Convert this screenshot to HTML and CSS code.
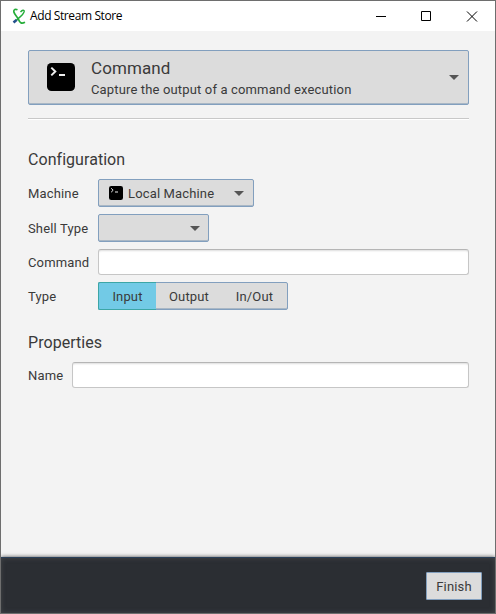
FILE: index.html
```html
<!DOCTYPE html>
<html lang="en">
<head>
<meta charset="utf-8">
<title>Add Stream Store</title>
<link rel="stylesheet" href="styles.css">
</head>
<body>
<svg width="0" height="0" class="defs">
  <symbol id="terminal" viewBox="0 0 28 28">
    <rect width="28" height="28" rx="4.500" fill="#000"/>
    <path d="M4.300 4.600 8.300 8.500 4.300 12.400" fill="none" stroke="#eee" stroke-width="2"/>
    <path d="M12 12h6" stroke="#eee" stroke-width="2"/>
  </symbol>
</svg>
<div class="window">
  <header class="titlebar">
    <svg class="logo" width="14" height="17" viewBox="0 0 14 17" fill="none">
      <path d="M1.500 14.500 4.800 11.800" stroke="#24508c" stroke-width="2.600"/>
      <path d="M4.500 12C7.500 9.500 11.800 6.500 12.200 3.400 12.300 1.700 10.300 2 8.500 4" stroke="#25ad39" stroke-width="1.400"/>
      <path d="M5.500 1.800C3.500.8 1.500 1.200 1.800 3.800 2.500 7 5.800 9 6.800 12 7.800 15 9.500 16 13 14.200" stroke="#25ad39" stroke-width="1.700"/>
    </svg>
    <span class="title">Add Stream Store</span>
    <svg class="controls" width="103" height="11" viewBox="0 0 103 11" fill="none" stroke="#000">
      <path d="M0 5.500h10M45.500.5h9v9h-9z"/>
      <path d="M91 .5l10 10M101 .5l-10 10"/>
    </svg>
  </header>
  <main class="content">
    <div class="box provider">
      <svg class="provider-icon"><use href="#terminal"/></svg>
      <div class="provider-text">
        <div class="provider-name">Command</div>
        <div class="provider-desc">Capture the output of a command execution</div>
      </div>
      <span class="arrow"></span>
    </div>
    <div class="separator"></div>
    <h2 class="heading">Configuration</h2>
    <div class="form">
      <label>Machine</label>
      <div class="box combo machine">
        <svg class="small-icon"><use href="#terminal"/></svg>
        <span class="machine-name">Local Machine</span>
        <span class="arrow"></span>
      </div>
      <label>Shell Type</label>
      <div class="box combo shell"><span class="arrow"></span></div>
      <label>Command</label>
      <div class="field"></div>
      <label>Type</label>
      <div class="box toggle">
        <span class="seg selected">Input</span>
        <span class="seg output">Output</span>
        <span class="seg inout">In/Out</span>
      </div>
    </div>
    <h2 class="heading properties">Properties</h2>
    <div class="form name-form">
      <label>Name</label>
      <div class="field"></div>
    </div>
  </main>
  <footer class="footer"><div class="finish">Finish</div></footer>
</div>
</body>
</html>
```
FILE: styles.css
```css
* { box-sizing: border-box; }
body { margin: 0; }
.defs { display: block; }
.window {
  width: 496px; height: 614px;
  display: flex; flex-direction: column;
  border: 1px solid #6e6e6e;
  background: #f3f3f3;
  color: #3a3a3a;
  font: 13px/16px Roboto, sans-serif;
  letter-spacing: 0.15px;
  white-space: nowrap;
}
.titlebar {
  height: 30px; flex: none;
  display: flex; align-items: center;
  padding: 0 16px 0 11px;
  background: #fff;
}
.logo { margin-right: 4px; }
.title { color: #000; font: 12px/16px "Open Sans", sans-serif; letter-spacing: -0.4px; }
.controls { margin-left: auto; }
.content { flex: 1; padding: 19px 26px 0 27px; }
.box {
  display: flex; align-items: center;
  background: #dcdcdc;
  border: 1px solid #829fbe;
  border-radius: 2px;
  box-shadow: inset 0 -1px #a9b7c5;
}
.arrow {
  margin-left: auto;
  border: solid transparent;
  border-width: 5px 5px 0;
  border-top-color: #555;
}
.provider { height: 55px; padding: 0 9px 0 18px; }
.provider-icon { width: 28px; height: 28px; margin: -2px 16px 0 0; }
.provider-name { font-size: 17px; line-height: 20px; letter-spacing: 0.1px; }
.provider-desc { padding-top: 4px; }
.separator { height: 1px; margin-top: 13px; background: #c8c8c8; box-shadow: 0 1px #fff; }
.heading { margin: 31px 0 9px; font-size: 16px; font-weight: 400; line-height: 20px; letter-spacing: 0.05px; }
.form {
  display: grid;
  grid-template-columns: 64px 1fr;
  column-gap: 6px; row-gap: 7px;
  align-items: center;
}
label, .machine-name { padding-top: 2px; }
.combo { height: 28px; padding: 0 9px 0 10px; }
.machine { width: 156px; }
.shell { width: 111px; padding-right: 8px; }
.small-icon { width: 14px; height: 14px; margin-right: 5px; }
.field {
  height: 26px;
  background: #fff;
  border: 1px solid #c6c6c6;
  border-top-color: #b5b5b5;
  border-radius: 3px;
  box-shadow: inset 0 2px 2px -1px #ddd;
}
.toggle { width: 190px; height: 28px; }
.seg { text-align: center; line-height: 28px; }
.selected {
  width: 58px; height: 28px; margin-left: -1px;
  background: #72cae6;
  border: solid #3ca6a6; border-width: 1px 0 1px 1px;
  border-radius: 2px 0 0 2px;
}
.output { width: 66px; padding-top: 2px; }
.inout { width: 65px; padding-top: 2px; }
.properties { margin: 23px 0 9px; }
.name-form { grid-template-columns: 38px 1fr; }
.footer {
  height: 56px; flex: none;
  display: flex; justify-content: flex-end;
  padding: 14px 13px 0 0;
  background: #2b2e33;
  border-top: 1px solid #2a4059;
  box-shadow: 0 0 4px #444, inset 0 0 5px #44484c;
  clip-path: inset(-6px 0 0 0);
}
.finish {
  width: 56px; height: 28px;
  background: #dcdcdc; border: 1px solid #829fbe;
  border-radius: 1px;
  text-align: center; line-height: 27px;
}
```
